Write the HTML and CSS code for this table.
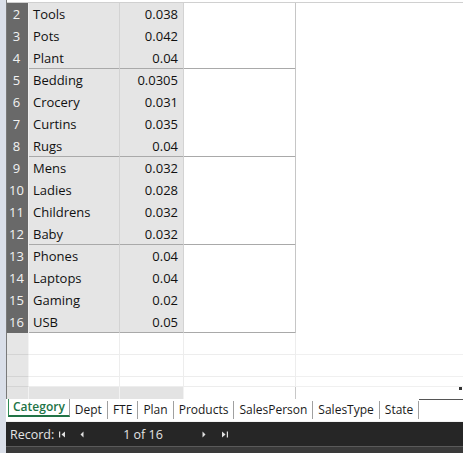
FILE: index.html
```html
<!DOCTYPE html>
<html>
<head>
<meta charset="utf-8">
<link rel="stylesheet" href="styles.css">
</head>
<body>
<div class="app">
  <div class="strip"></div>
  <div class="content">
    <div class="sheet">
      <div class="row"><div class="rh">2</div><div class="c name">Tools</div><div class="c val">0.038</div><div class="c blank"></div><div class="c rest"></div></div>
      <div class="row"><div class="rh">3</div><div class="c name">Pots</div><div class="c val">0.042</div><div class="c blank"></div><div class="c rest"></div></div>
      <div class="row grp"><div class="rh">4</div><div class="c name">Plant</div><div class="c val">0.04</div><div class="c blank"></div><div class="c rest"></div></div>
      <div class="row"><div class="rh">5</div><div class="c name">Bedding</div><div class="c val">0.0305</div><div class="c blank"></div><div class="c rest"></div></div>
      <div class="row"><div class="rh">6</div><div class="c name">Crocery</div><div class="c val">0.031</div><div class="c blank"></div><div class="c rest"></div></div>
      <div class="row"><div class="rh">7</div><div class="c name">Curtins</div><div class="c val">0.035</div><div class="c blank"></div><div class="c rest"></div></div>
      <div class="row grp"><div class="rh">8</div><div class="c name">Rugs</div><div class="c val">0.04</div><div class="c blank"></div><div class="c rest"></div></div>
      <div class="row"><div class="rh">9</div><div class="c name">Mens</div><div class="c val">0.032</div><div class="c blank"></div><div class="c rest"></div></div>
      <div class="row"><div class="rh">10</div><div class="c name">Ladies</div><div class="c val">0.028</div><div class="c blank"></div><div class="c rest"></div></div>
      <div class="row"><div class="rh">11</div><div class="c name">Childrens</div><div class="c val">0.032</div><div class="c blank"></div><div class="c rest"></div></div>
      <div class="row grp"><div class="rh">12</div><div class="c name">Baby</div><div class="c val">0.032</div><div class="c blank"></div><div class="c rest"></div></div>
      <div class="row"><div class="rh">13</div><div class="c name">Phones</div><div class="c val">0.04</div><div class="c blank"></div><div class="c rest"></div></div>
      <div class="row"><div class="rh">14</div><div class="c name">Laptops</div><div class="c val">0.04</div><div class="c blank"></div><div class="c rest"></div></div>
      <div class="row"><div class="rh">15</div><div class="c name">Gaming</div><div class="c val">0.02</div><div class="c blank"></div><div class="c rest"></div></div>
      <div class="row grp"><div class="rh">16</div><div class="c name">USB</div><div class="c val">0.05</div><div class="c blank"></div><div class="c rest"></div></div>
      <div class="row empty"><div class="rh"></div><div class="c name"></div><div class="c val"></div><div class="c blank"></div><div class="c rest"></div></div>
      <div class="row empty"><div class="rh"></div><div class="c name"></div><div class="c val"></div><div class="c blank"></div><div class="c rest"></div></div>
      <div class="row empty short"><div class="rh"></div><div class="c name"></div><div class="c val"></div><div class="c blank"></div><div class="c rest"></div></div>
      <div class="row band"><div class="rh"></div><div class="c name"></div><div class="c val"></div><div class="c blank"></div><div class="c rest"></div></div>
    </div>
    <div class="tabs">
      <div class="tab active">Category</div>
      <div class="tab">Dept</div>
      <div class="tab">FTE</div>
      <div class="tab">Plan</div>
      <div class="tab">Products</div>
      <div class="tab">SalesPerson</div>
      <div class="tab">SalesType</div>
      <div class="tab">State</div>
      <div class="tab-fill"></div>
    </div>
    <div class="record">
      <span class="rec-label">Record:</span>
      <svg class="nav first" width="7" height="7" viewBox="0 0 7 7"><rect x="0" y="0.5" width="1.2" height="6" fill="#e0e0e0"/><path d="M6 0.5 L2.5 3.5 L6 6.5 Z" fill="#e0e0e0"/></svg>
      <svg class="nav prev" width="4" height="7" viewBox="0 0 4 7"><path d="M3.5 0.5 L0.5 3.5 L3.5 6.5 Z" fill="#e0e0e0"/></svg>
      <span class="counter">1 of 16</span>
      <svg class="nav next" width="4" height="7" viewBox="0 0 4 7"><path d="M0.5 0.5 L3.5 3.5 L0.5 6.5 Z" fill="#e0e0e0"/></svg>
      <svg class="nav last" width="7" height="7" viewBox="0 0 7 7"><path d="M1 0.5 L4.5 3.5 L1 6.5 Z" fill="#e0e0e0"/><rect x="5.8" y="0.5" width="1.2" height="6" fill="#e0e0e0"/></svg>
    </div>
    <div class="bottom"></div>
  </div>
  <div class="grip"></div>
</div>
</body>
</html>
```

FILE: styles.css
```css
* { box-sizing: border-box; }
html, body { margin: 0; padding: 0; }
body {
  width: 463px;
  height: 453px;
  overflow: hidden;
  background: #ffffff;
  font-family: "Open Sans", "Noto Sans", sans-serif;
}
.app {
  position: relative;
  display: flex;
  width: 463px;
  height: 453px;
}
.strip {
  width: 6px;
  flex: none;
  background: #dadfe9;
}
.content {
  flex: 1;
  display: flex;
  flex-direction: column;
  min-width: 0;
}
.sheet {
  padding-top: 2px;
  border-left: 1px solid #7a7a7a;
}
.sheet .row:first-child { border-top: 1px solid #d0d0d0; }
.row {
  display: grid;
  grid-template-columns: 22px 91px 64px 112px 1fr;
  height: 22px;
}
.row:first-child { height: 23px; }
.rh {
  background: #696969;
  color: #f2f2f2;
  font-size: 13px;
  line-height: 22px;
  text-align: center;
  padding-right: 2px;
  border-bottom: 1px solid #a8a8a8;
  border-right: 1px solid #eeeeee;
}
.c {
  font-size: 13px;
  line-height: 22px;
  color: #111;
  white-space: nowrap;
  overflow: hidden;
}
.name, .val {
  background: #e5e5e5;
  border-bottom: 1px solid #d3d3d3;
  border-right: 1px solid #d3d3d3;
}
.name { padding-left: 4px; }
.val { text-align: right; padding-right: 5px; }
.blank {
  background: #fff;
  border-bottom: 1px solid #dcdcdc;
  border-right: 1px solid #c6c6c6;
}
.rest {
  background: #fff;
  border-bottom: 1px solid #f0f0f0;
}
.grp .name, .grp .val, .grp .blank {
  border-bottom: 2px solid #a9a9a9;
}
.empty .rh {
  background: #e6e6e6;
  border-bottom: 1px solid #d4d4d4;
  border-right: 1px solid #f4f4f4;
}
.empty .name, .empty .val, .empty .blank {
  background: #fff;
  border-bottom: 1px solid #ededed;
  border-right: 1px solid #ededed;
}
.short { height: 10px; }
.band { height: 12px; }
.band .rh { background: #e3e3e3; border: none; border-right: 1px solid #f2f2f2; }
.band .name, .band .val { background: #e3e3e3; border: none; border-right: 1px solid #f2f2f2; }
.band .blank { border-bottom: none; border-right: 1px solid #c8c8c8; }
.band .rest { border-bottom: none; }

.tabs {
  display: flex;
  align-items: center;
  height: 23px;
  padding-left: 2px;
  background: #fff;
  border-bottom: 1px solid #f2f2f2;
  font-size: 12px;
  color: #1a1a1a;
}
.tab {
  padding: 0 5px;
  line-height: 18px;
  border-right: 1px solid #a0a0a0;
  white-space: nowrap;
}
.tab.active {
  align-self: stretch;
  display: flex;
  align-items: center;
  padding: 0 4px 0 4px;
  border-left: 1px solid #2e8b57;
  border-bottom: 2px solid #217346;
  border-right: 1px solid #a0a0a0;
  margin-bottom: 4px;
  color: #217346;
  font-weight: 600;
}
.tab-fill {
  flex: 1;
  align-self: stretch;
  border-top: 1px solid #555;
}

.record {
  display: flex;
  align-items: center;
  height: 24px;
  background: #262626;
  color: #e4e4e4;
  font-size: 12.5px;
  padding-left: 4px;
}
.rec-label { width: 38px; }
.nav { flex: none; display: block; }
.first { margin-left: 11px; }
.prev { margin-left: 14px; }
.counter { width: 118px; text-align: center; }
.last { margin-left: 15px; }
.bottom {
  flex: 1;
  background: #3a3a3a;
  border-top: 1px solid #5a5a5a;
}
.grip {
  position: absolute;
  left: 459px;
  top: 387px;
  width: 3px;
  height: 3px;
  background: #333;
}
```
